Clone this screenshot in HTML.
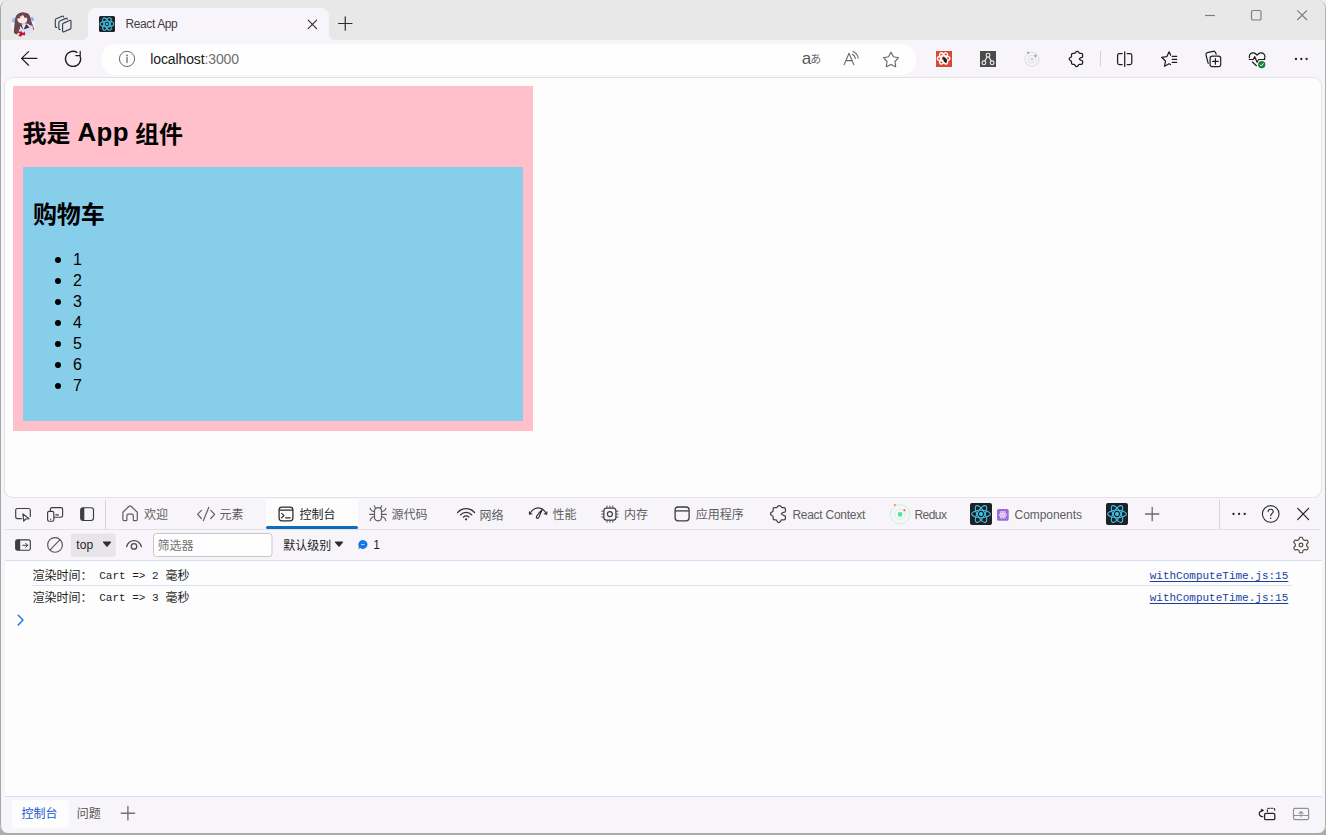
<!DOCTYPE html>
<html><head><meta charset="utf-8"><title>React App</title>
<style>
*{box-sizing:border-box}
html,body{margin:0;padding:0}
body{width:1326px;height:835px;overflow:hidden;position:relative;background:linear-gradient(#efedf3 0,#efedf3 10px,#a9aca9 40px);font-family:"Liberation Sans",sans-serif;color:#1b1b1b}
.abs{position:absolute}
#win{position:absolute;left:0;top:0;width:1326px;height:833px;background:#f7f5f9;border-radius:8px;overflow:hidden}
#win:after{content:"";position:absolute;left:0;top:0;right:0;bottom:0;border-radius:8px;border-left:1px solid #a3aaa3;border-right:1px solid #a9b3a9;pointer-events:none}
#tabstrip{position:absolute;left:0;top:0;width:1326px;height:40px;background:#e8e8e8}
#tab{position:absolute;left:88px;top:8px;width:241px;height:32px;background:#f7f5f9;border-radius:8px 8px 0 0}
#tab:before,#tab:after{content:"";position:absolute;bottom:0;width:5px;height:5px}
#tab:before{left:-5px;background:radial-gradient(circle at 0 0,rgba(0,0,0,0) 4.5px,#f7f5f9 5px)}
#tab:after{right:-5px;background:radial-gradient(circle at 100% 0,rgba(0,0,0,0) 4.5px,#f7f5f9 5px)}
#pill{position:absolute;left:101px;top:44px;width:815px;height:30.5px;border-radius:15.25px;background:#fefefe}
#page{position:absolute;left:5px;top:78px;width:1316px;height:419px;background:#fdfdfd;border-radius:8px;box-shadow:0 0 0 1px #e4e2e6}
#pink{position:absolute;left:13px;top:86px;width:520px;height:344.5px;background:#ffc0cb}
#blue{position:absolute;left:23px;top:167px;width:500px;height:253.7px;background:#87ceeb}
.t{position:absolute;white-space:pre;line-height:1}
svg{display:block}
.ic{position:absolute;overflow:visible}
svg text{font-family:"Liberation Sans","Noto Sans CJK SC",sans-serif;white-space:pre}
</style></head><body>
<div id="win">
<div id="tabstrip"></div>
<div id="tab"></div>
<svg class="ic" style="left:11px;top:11.6px;" width="24" height="25">
<defs><clipPath id="avc"><ellipse cx="12" cy="12.4" rx="12" ry="12.4"/></clipPath><filter id="avb" x="-10%" y="-10%" width="120%" height="120%"><feGaussianBlur stdDeviation="0.45"/></filter></defs>
<g clip-path="url(#avc)"><g filter="url(#avb)">
<rect x="-2" y="-2" width="28" height="30" fill="#f3f0f8"/>
<ellipse cx="2.6" cy="8" rx="2.2" ry="2.6" fill="#8cc4f4"/>
<ellipse cx="21.8" cy="6.6" rx="1.8" ry="2.6" fill="#7db8f2"/>
<path d="M2.6 22 C3.4 16 3.6 9 4.4 5.6 C5.6 1.4 9.5 0.2 12.5 0.3 C16.5 0.4 19 2.4 19.6 6 C20.2 10 22 13.5 23.2 17.5 L19.8 18.5 L17.5 12 L15.5 11.5 L9 13 L8.5 19 L6 22.5 Z" fill="#6d454c"/>
<path d="M6.3 7.5 C6.2 4.6 8.6 3.2 11.2 3.2 C14.2 3.2 16.4 4.8 16.3 7.4 C16.2 9.8 14.2 11.7 11.8 11.6 C8.9 11.5 6.5 10 6.3 7.5Z" fill="#fbe9e6"/>
<path d="M5.6 7.6 C5.8 4 8 2.4 11.3 2.4 L10.4 4.6 L8.8 4.2 L8.2 6.2 L6.6 6.2 Z M11.3 2.4 C14.6 2.4 16.9 4.2 16.8 7.8 L15.4 5.4 L13.6 5.0 L12.8 3.8 Z" fill="#6d454c"/>
<ellipse cx="8.3" cy="5.5" rx="1.0" ry="0.8" fill="#7c3a44"/><ellipse cx="13.9" cy="4.9" rx="1.0" ry="0.8" fill="#7c3a44"/>
<path d="M11.2 11 L12.4 15.6 L14.8 11.6 Z" fill="#f6d8d2"/>
<path d="M12.4 16 L15 11.8 L21.5 14 L22.5 20 L16 24 L10 21 Z" fill="#e4def2"/>
<path d="M8.6 13.4 L12.2 17.4 L10.6 12.6 Z M15.2 12 L12.6 17.6 L18.5 15.5 Z" fill="#34364f"/>
<path d="M7.4 18.6 L10 15.4 L11.8 18 L9.5 20.6 Z" fill="#d9d2ea"/>
<path d="M3 21 C3.4 17 4 14 5 11 L8.6 12.5 L8.8 16.5 L7.2 19.5 L5.4 22 Z" fill="#6d454c"/>
<path d="M6.6 20.2 L10.4 19.2 L12 21 L13.8 19.6 L14.2 23.4 L11.8 23 L9.6 25 L7 23.4 L9 21.8 Z" fill="#b81f30"/>
</g></g></svg>
<svg class="ic" style="left:0px;top:0px;" width="90" height="40">
<g fill="none" stroke="#3a4350" stroke-width="1.15" stroke-linejoin="round" stroke-linecap="round">
<path d="M63.6 23.1 L69.6 20.5 Q71 19.9 71 21.5 V27.7 Q71 28.7 70.1 29.1 L64.1 31.7 Q62.6 32.3 62.6 30.7 V24.6 Q62.6 23.5 63.6 23.1Z"/>
<path d="M67.3 19.1 Q67.2 17.9 65.9 18.4 L59.8 21 Q58.8 21.4 58.8 22.5 V28.4 Q58.8 29.6 60.3 29.5"/>
<path d="M63.6 17 Q63.5 15.8 62.2 16.3 L56.3 18.8 Q55.3 19.2 55.3 20.3 V26.3 Q55.3 27.5 56.8 27.4"/>
</g></svg>
<svg class="ic" style="left:99px;top:16px;" width="16" height="16"><rect width="16" height="16" rx="1.5" fill="#20232a"/><g transform="translate(8.0 8.0)" fill="none" stroke="#3fb9da" stroke-width="1.1"><ellipse rx="6.90" ry="2.70" transform="rotate(0)"/><ellipse rx="6.90" ry="2.70" transform="rotate(60)"/><ellipse rx="6.90" ry="2.70" transform="rotate(120)"/></g><circle cx="8.0" cy="8.0" r="1.30" fill="#3fb9da"/></svg>
<div class="t" style="left:125.40px;top:14.64px;height:18px;line-height:18px;font-size:12px;font-weight:normal;font-family:'Liberation Sans',sans-serif;color:#3f3f3f;letter-spacing:-0.38px;">React App</div>
<svg class="ic" style="left:0px;top:0px;" width="400" height="40">
<g fill="none" stroke="#2b2b2b" stroke-width="1.1" stroke-linecap="round">
<path d="M308.2 20.2 L316.6 28.6 M316.6 20.2 L308.2 28.6"/>
<path d="M338.5 23.5 H352 M345.25 16.8 V30.2" stroke-width="1.2"/>
</g></svg>
<svg class="ic" style="left:1190px;top:0px;" width="136" height="40">
<g fill="none" stroke="#7d7d7d" stroke-width="1.15">
<path d="M15 15.5 H25"/>
<rect x="61.5" y="10.5" width="9.5" height="9.5" rx="1.6"/>
<path d="M107.3 10.3 L117 20 M117 10.3 L107.3 20"/>
</g></svg>
<div id="pill"></div>
<svg class="ic" style="left:0px;top:40px;" width="160" height="38">
<g fill="none" stroke="#1f1f1f" stroke-width="1.25" stroke-linecap="round" stroke-linejoin="round">
<path d="M36.8 18.4 H21.6 M28.6 11.6 L21.6 18.4 L28.6 25.2"/>
<path d="M80.3 16.6 A7.6 7.6 0 1 1 76.9 12.3" stroke-width="1.35"/>
<path d="M80.2 11.4 V15.6 H75.8"/>
</g>
<circle cx="127" cy="18.9" r="7.6" fill="none" stroke="#6b6b6b" stroke-width="1"/>
<circle cx="127" cy="15.4" r="0.9" fill="#6b6b6b"/><path d="M127 17.6 V22.6" stroke="#6b6b6b" stroke-width="1.3" stroke-linecap="round"/>
</svg>
<div class="t" style="left:150.3px;top:49.2px;font-size:14px;height:20px;line-height:20px;letter-spacing:-0.12px;color:#1a1a1a">localhost<span style="color:#6e6e6e">:3000</span></div>
<svg style="position:absolute;left:801px;top:52px;overflow:visible;" width="11" height="13"><text x="0.69" y="11.53" font-size="17" fill="#585858" style="font-family:'Liberation Sans','Noto Sans CJK JP',sans-serif">a</text></svg>
<svg style="position:absolute;left:810px;top:52px;overflow:visible;" width="11" height="13"><text x="0.24" y="10.81" font-size="11" fill="#666" style="font-family:'Liberation Sans','Noto Sans CJK JP',sans-serif">あ</text></svg>
<svg class="ic" style="left:840px;top:44px;" width="24" height="30">
<g fill="none" stroke="#666" stroke-width="1.05" stroke-linecap="round" stroke-linejoin="round">
<path d="M4.1 20.7 L9.0 9.2 L13.9 20.7 M5.9 16.6 H12.1"/>
<path d="M12.4 10.2 Q15.0 11.6 15.4 14.6"/>
<path d="M13.0 7.6 Q17.4 9.4 18.2 14.2"/>
</g></svg>
<svg class="ic" style="left:878px;top:44px;" width="26" height="30"><path d="M13.00 8.20 L15.47 12.80 L20.61 13.73 L16.99 17.50 L17.70 22.67 L13.00 20.40 L8.30 22.67 L9.01 17.50 L5.39 13.73 L10.53 12.80Z" fill="none" stroke="#666" stroke-width="1.1" stroke-linejoin="round"/></svg>
<svg class="ic" style="left:936px;top:51px;" width="16" height="16">
<rect width="16" height="16" fill="#d84a38"/>
<g transform="translate(7.6 7.4)" fill="none" stroke="#fff" stroke-width="1.3">
<ellipse rx="6.3" ry="2.5"/><ellipse rx="6.3" ry="2.5" transform="rotate(60)"/><ellipse rx="6.3" ry="2.5" transform="rotate(120)"/></g>
<ellipse cx="9.3" cy="9.3" rx="1.7" ry="2.1" fill="#1a1a1a" transform="rotate(-25 9.3 9.3)"/><circle cx="7.9" cy="7.3" r="1.0" fill="#1a1a1a"/>
</svg>
<svg class="ic" style="left:980px;top:51px;" width="16" height="16">
<rect width="16" height="16" fill="#4b4b4b"/>
<g fill="none" stroke="#f2f2f2" stroke-width="1.1">
<circle cx="8" cy="4.2" r="1.9"/><circle cx="3.9" cy="11.8" r="1.9"/><circle cx="12.1" cy="11.8" r="1.9"/>
<path d="M7.1 5.9 L4.8 10.1 M8.9 5.9 L11.2 10.1"/></g>
</svg>
<svg class="ic" style="left:1024px;top:51px;" width="16" height="16">
<circle cx="8" cy="8.1" r="7" fill="none" stroke="#dcdcdc" stroke-width="1"/>
<circle cx="8" cy="8.1" r="4" fill="none" stroke="#e2e2e2" stroke-width="1"/>
<circle cx="8" cy="8.1" r="1.7" fill="#d6d6d6"/>
<circle cx="4.2" cy="1.8" r="1.1" fill="#9a9a9a"/><circle cx="11.5" cy="4.9" r="1.1" fill="#8f8f8f"/>
</svg>
<svg class="ic" style="left:1061px;top:45px;" width="30" height="30"><path d="M11.90 8.30 L13.60 8.30 Q14.40 8.30 14.67 7.20 Q16.20 5.40 17.73 7.20 Q18.00 8.30 18.80 8.30 L20.20 8.30 Q21.60 8.30 21.60 9.70 L21.60 11.80 Q21.60 12.50 20.12 12.65 Q16.48 14.00 20.12 15.35 Q21.60 15.50 21.60 16.20 L21.60 18.00 Q21.60 19.40 20.20 19.40 L18.30 19.40 Q17.50 19.40 17.23 20.61 Q15.70 22.59 14.17 20.61 Q13.90 19.40 13.10 19.40 L11.90 19.40 Q10.50 19.40 10.50 18.00 L10.50 16.60 Q10.50 15.80 9.23 15.53 Q7.17 14.00 9.23 12.47 Q10.50 12.20 10.50 11.40 L10.50 9.70 Q10.50 8.30 11.90 8.30Z" fill="none" stroke="#1f1f1f" stroke-width="1.3" stroke-linejoin="round"/></svg>
<div class="abs" style="left:1100px;top:51px;width:1px;height:15px;background:#d2d0d4"></div>
<svg class="ic" style="left:1110px;top:44px;" width="30" height="30">
<g fill="none" stroke="#1f1f1f" stroke-width="1.25" stroke-linecap="round" stroke-linejoin="round">
<path d="M12.2 9.6 H9.4 Q7.6 9.6 7.6 11.4 V18.8 Q7.6 20.6 9.4 20.6 H12.2"/>
<path d="M17.2 9.6 H20.0 Q21.8 9.6 21.8 11.4 V18.8 Q21.8 20.6 20.0 20.6 H17.2"/>
<path d="M14.7 7.8 V22.4"/>
</g></svg>
<svg class="ic" style="left:1155px;top:44px;" width="30" height="30">
<g fill="none" stroke="#1f1f1f" stroke-width="1.25" stroke-linecap="round" stroke-linejoin="round">
<path d="M15.7 11.3 L14.1 7.8 L11.9 12.6 L6.6 13.3 L10.5 17.0 L9.5 22.2 L14.1 19.7 L15.5 20.5"/>
<path d="M17.2 12.3 H21.7 M17.2 15.3 H21.7 M17.2 18.3 H21.7" stroke-width="1.35"/>
</g></svg>
<svg class="ic" style="left:1200px;top:44px;" width="30" height="30">
<g fill="none" stroke="#1f1f1f" stroke-width="1.2" stroke-linecap="round" stroke-linejoin="round">
<rect x="10.1" y="12.1" width="10.6" height="10.6" rx="2.2"/>
<path d="M15.4 14.6 V20.2 M12.6 17.4 H18.2"/>
<path d="M8.2 19.4 L6.0 11.0 Q5.6 9.2 7.4 8.7 L13.0 7.3 Q14.8 6.9 15.5 8.6 L16.2 10.2"/>
</g></svg>
<svg class="ic" style="left:1244px;top:44px;" width="30" height="30">
<g fill="none" stroke="#1f1f1f" stroke-width="1.2" stroke-linecap="round" stroke-linejoin="round">
<path d="M20.3 15.0 Q21.6 12.8 20.5 10.7 Q19.2 8.5 16.6 8.9 Q14.6 9.3 13.1 11.2 Q11.6 9.3 9.7 8.9 Q7.0 8.5 5.7 10.7 Q5.0 12.2 5.5 13.8"/>
<path d="M8.4 18.0 L12.4 21.7"/>
<path d="M5.2 15.5 H9.2 L10.8 12.6 L13.0 18.2 L14.6 15.5 H20.8"/>
</g>
<circle cx="17.7" cy="20.6" r="3.7" fill="#16823a"/>
<path d="M16.0 20.7 L17.3 22.0 L19.5 19.4" fill="none" stroke="#fff" stroke-width="1"/>
</svg>
<svg class="ic" style="left:1290px;top:50px;" width="24" height="18"><circle cx="6" cy="9" r="1.15" fill="#1f1f1f"/><circle cx="11.3" cy="9" r="1.15" fill="#1f1f1f"/><circle cx="16.6" cy="9" r="1.15" fill="#1f1f1f"/></svg>
<div id="page"></div>
<div id="pink"></div>
<div id="blue"></div>
<svg style="position:absolute;left:22px;top:121px;overflow:visible;" width="50" height="26"><text x="0.56" y="21.23" font-size="24" font-weight="bold" fill="#000">我是</text></svg>
<div class="t" style="left:77.60px;top:112.76px;height:39px;line-height:39px;font-size:25.8px;font-weight:bold;font-family:'Liberation Sans',sans-serif;color:#000;letter-spacing:0.4px;">App</div>
<svg style="position:absolute;left:134px;top:121px;overflow:visible;" width="50" height="26"><text x="1.01" y="21.50" font-size="24" font-weight="bold" fill="#000">组件</text></svg>
<svg style="position:absolute;left:32px;top:201px;overflow:visible;" width="74" height="26"><text x="0.88" y="22.22" font-size="24" font-weight="bold" fill="#000">购物车</text></svg>
<div class="t" style="left:73.00px;top:247.75px;height:24px;line-height:24px;font-size:16px;font-weight:normal;font-family:'Liberation Sans',sans-serif;color:#000;letter-spacing:0px;">1</div>
<div class="abs" style="left:54.9px;top:256.6px;width:6.5px;height:6.5px;border-radius:50%;background:#000"></div>
<div class="t" style="left:73.00px;top:268.75px;height:24px;line-height:24px;font-size:16px;font-weight:normal;font-family:'Liberation Sans',sans-serif;color:#000;letter-spacing:0px;">2</div>
<div class="abs" style="left:54.9px;top:277.6px;width:6.5px;height:6.5px;border-radius:50%;background:#000"></div>
<div class="t" style="left:73.00px;top:289.75px;height:24px;line-height:24px;font-size:16px;font-weight:normal;font-family:'Liberation Sans',sans-serif;color:#000;letter-spacing:0px;">3</div>
<div class="abs" style="left:54.9px;top:298.6px;width:6.5px;height:6.5px;border-radius:50%;background:#000"></div>
<div class="t" style="left:73.00px;top:310.75px;height:24px;line-height:24px;font-size:16px;font-weight:normal;font-family:'Liberation Sans',sans-serif;color:#000;letter-spacing:0px;">4</div>
<div class="abs" style="left:54.9px;top:319.6px;width:6.5px;height:6.5px;border-radius:50%;background:#000"></div>
<div class="t" style="left:73.00px;top:331.75px;height:24px;line-height:24px;font-size:16px;font-weight:normal;font-family:'Liberation Sans',sans-serif;color:#000;letter-spacing:0px;">5</div>
<div class="abs" style="left:54.9px;top:340.6px;width:6.5px;height:6.5px;border-radius:50%;background:#000"></div>
<div class="t" style="left:73.00px;top:352.75px;height:24px;line-height:24px;font-size:16px;font-weight:normal;font-family:'Liberation Sans',sans-serif;color:#000;letter-spacing:0px;">6</div>
<div class="abs" style="left:54.9px;top:361.6px;width:6.5px;height:6.5px;border-radius:50%;background:#000"></div>
<div class="t" style="left:73.00px;top:373.75px;height:24px;line-height:24px;font-size:16px;font-weight:normal;font-family:'Liberation Sans',sans-serif;color:#000;letter-spacing:0px;">7</div>
<div class="abs" style="left:54.9px;top:382.6px;width:6.5px;height:6.5px;border-radius:50%;background:#000"></div>
<div class="abs" style="left:1px;top:498px;width:1324px;height:335px;background:#f7f5f9"></div>
<div class="abs" style="left:5px;top:529px;width:1315px;height:1px;background:#e3e1e5"></div>
<div class="abs" style="left:266px;top:499px;width:92px;height:30px;background:#fdfdfd"></div>
<div class="abs" style="left:266px;top:526px;width:92px;height:3px;background:#0f6cbd;border-radius:1.5px"></div>
<div class="abs" style="left:5px;top:561px;width:1317px;height:235px;background:#fdfdfd"></div>
<div class="abs" style="left:5px;top:560px;width:1317px;height:1px;background:#d3e1f6"></div>
<div class="abs" style="left:5px;top:796px;width:1317px;height:1px;background:#d3e1f6"></div>
<div class="abs" style="left:105px;top:500px;width:1px;height:29px;background:#d6d4d8"></div>
<div class="abs" style="left:1219px;top:500px;width:1px;height:29px;background:#d6d4d8"></div>
<svg class="ic" style="left:0px;top:498px;" width="800" height="32">
<g fill="none" stroke="#3d3d3d" stroke-width="1.15" stroke-linecap="round" stroke-linejoin="round">
<!-- inspect -->
<path d="M21.4 20.6 H17.4 Q15.7 20.6 15.7 18.9 V12.2 Q15.7 10.5 17.4 10.5 H28.6 Q30.3 10.5 30.3 12.2 V18.4"/>
<path d="M22.9 15.9 L23.7 23.2 L25.7 21.0 L29.0 20.7 Z"/>
<!-- device -->
<path d="M50.4 13.2 V11.2 Q50.4 9.6 52 9.6 H61 Q62.6 9.6 62.6 11.2 V17.6 Q62.6 19.2 61 19.2 H54.4"/>
<rect x="47.6" y="13.4" width="6.2" height="9.8" rx="1.4"/>
<path d="M55.8 16.9 H58.4"/>
<!-- dock -->
<rect x="80.7" y="9.7" width="12.8" height="12.8" rx="2.4"/>
</g>
<circle cx="50.6" cy="21.2" r="0.65" fill="#3d3d3d"/>
<path d="M84.3 9.7 H83.1 Q80.7 9.7 80.7 12.1 V20.1 Q80.7 22.5 83.1 22.5 H84.3 Z" fill="#3d3d3d"/>
<!-- home -->
<path d="M122.9 14.2 L129.1 8.3 Q130.1 7.4 131.1 8.3 L137.3 14.2 V21.4 Q137.3 22.6 136.1 22.6 H134.2 Q133.3 22.6 133.3 21.7 V17.6 Q133.3 16.1 131.8 16.1 H128.4 Q126.9 16.1 126.9 17.6 V21.7 Q126.9 22.6 126.0 22.6 H124.1 Q122.9 22.6 122.9 21.4 Z" fill="none" stroke="#5e5e5e" stroke-width="1.2" stroke-linejoin="round"/>
<!-- </> -->
<g fill="none" stroke="#5e5e5e" stroke-width="1.2" stroke-linecap="round" stroke-linejoin="round">
<path d="M201.4 12.3 L197.6 16.4 L201.4 20.5 M210.8 12.3 L214.6 16.4 L210.8 20.5 M208.8 9.3 L203.4 22.6"/>
</g>
<!-- console icon -->
<g fill="none" stroke="#2a2a2a" stroke-width="1.25" stroke-linecap="round" stroke-linejoin="round">
<rect x="279.1" y="9.0" width="13.8" height="13.8" rx="2.8"/>
<path d="M279.3 12.1 H292.7" stroke-width="1.1"/>
<path d="M281.7 15.4 L284.0 17.6 L281.7 19.8 M285.6 19.8 H290.2"/>
</g>
<!-- bug -->
<g fill="none" stroke="#5e5e5e" stroke-width="1.15" stroke-linecap="round" stroke-linejoin="round">
<rect x="374.5" y="9.6" width="7.0" height="13.2" rx="3.5"/>
<path d="M375.6 10.2 L374.2 7.8 M380.4 10.2 L381.8 7.8"/>
<path d="M374.5 13.6 Q371.0 13.4 370.0 10.2 M381.5 13.6 Q385.0 13.4 386.0 10.2"/>
<path d="M374.5 16.3 H369.6 M381.5 16.3 H386.4"/>
<path d="M374.5 18.8 Q371.0 19.0 370.2 22.6 M381.5 18.8 Q385.0 19.0 385.8 22.6"/>
</g>
<!-- wifi -->
<g fill="none" stroke="#2f2f2f" stroke-width="1.3" stroke-linecap="round">
<path d="M457.6 14.6 A11 11 0 0 1 474.6 14.6"/>
<path d="M460.5 16.9 A7.4 7.4 0 0 1 471.7 16.9"/>
<path d="M463.3 19.1 A3.9 3.9 0 0 1 468.9 19.1"/>
</g>
<circle cx="466.1" cy="21.3" r="1.15" fill="#2f2f2f"/>
<!-- perf -->
<g fill="none" stroke="#2f2f2f" stroke-width="1.15" stroke-linecap="round" stroke-linejoin="round">
<path d="M529.6 16.0 Q533.0 9.9 538.3 9.9 Q543.4 9.9 546.6 16.0"/>
<path d="M529.4 13.8 L529.6 16.1 L531.9 15.8 M546.9 13.8 L546.6 16.1 L544.3 15.8"/>
<path d="M542.6 11.2 Q540.6 14.6 538.9 19.3 Q538.2 20.8 537.0 20.3 Q535.9 19.7 536.6 18.3 Q539.0 14.4 542.6 11.2 Z"/>
</g>
<!-- memory chip -->
<g fill="none" stroke="#3d3d3d" stroke-width="1.2" stroke-linecap="round" stroke-linejoin="round">
<rect x="603.9" y="10.1" width="12.0" height="12.0" rx="2.6"/>
<circle cx="609.9" cy="16.1" r="2.5"/>
<path d="M607 8.0 V9.6 M609.9 8.0 V9.6 M612.8 8.0 V9.6 M607 22.6 V24.2 M609.9 22.6 V24.2 M612.8 22.6 V24.2 M601.8 13.2 H603.4 M601.8 16.1 H603.4 M601.8 19 H603.4 M616.4 13.2 H618 M616.4 16.1 H618 M616.4 19 H618" stroke-width="0.9"/>
</g>
<!-- application -->
<g fill="none" stroke="#3d3d3d" stroke-width="1.3" stroke-linejoin="round">
<rect x="675.1" y="9.0" width="14.0" height="13.8" rx="3"/>
<path d="M675.3 12.9 H688.9"/>
</g>
</svg>
<svg style="position:absolute;left:143px;top:508px;overflow:visible;" width="27" height="15"><text x="1.10" y="11.40" font-size="12" fill="#5e5e5e">欢迎</text></svg>
<svg style="position:absolute;left:219px;top:508px;overflow:visible;" width="26" height="15"><text x="0.42" y="11.39" font-size="12" fill="#5e5e5e">元素</text></svg>
<svg style="position:absolute;left:390px;top:508px;overflow:visible;" width="38" height="14"><text x="1.44" y="11.26" font-size="12" fill="#5e5e5e">源代码</text></svg>
<svg style="position:absolute;left:479px;top:508px;overflow:visible;" width="26" height="15"><text x="0.54" y="11.54" font-size="12" fill="#5e5e5e">网络</text></svg>
<svg style="position:absolute;left:551px;top:508px;overflow:visible;" width="27" height="15"><text x="1.46" y="11.40" font-size="12" fill="#5e5e5e">性能</text></svg>
<svg style="position:absolute;left:624px;top:508px;overflow:visible;" width="26" height="15"><text x="-0.09" y="11.38" font-size="12" fill="#5e5e5e">内存</text></svg>
<svg style="position:absolute;left:695px;top:508px;overflow:visible;" width="50" height="15"><text x="0.87" y="11.48" font-size="12" fill="#5e5e5e">应用程序</text></svg>
<svg style="position:absolute;left:298px;top:508px;overflow:visible;" width="38" height="15"><text x="1.52" y="11.43" font-size="12" fill="#1c1c1c">控制台</text></svg>
<svg class="ic" style="left:764px;top:500px;" width="30" height="30"><path d="M10.50 7.60 L12.50 7.60 Q13.30 7.60 13.60 6.45 Q15.30 4.56 17.00 6.45 Q17.30 7.60 18.10 7.60 L20.00 7.60 Q21.40 7.60 21.40 9.00 L21.40 11.40 Q21.40 12.10 19.60 12.30 Q15.20 13.80 19.60 15.30 Q21.40 15.50 21.40 16.20 L21.40 18.50 Q21.40 19.90 20.00 19.90 L17.60 19.90 Q16.80 19.90 16.50 21.39 Q14.80 23.82 13.10 21.39 Q12.80 19.90 12.00 19.90 L10.50 19.90 Q9.10 19.90 9.10 18.50 L9.10 16.60 Q9.10 15.80 7.67 15.50 Q5.33 13.80 7.67 12.10 Q9.10 11.80 9.10 11.00 L9.10 9.00 Q9.10 7.60 10.50 7.60Z" fill="none" stroke="#3f3f3f" stroke-width="1.25" stroke-linejoin="round"/></svg>
<div class="t" style="left:792.40px;top:505.84px;height:18px;line-height:18px;font-size:12px;font-weight:normal;font-family:'Liberation Sans',sans-serif;color:#5e5e5e;letter-spacing:-0.26px;">React Context</div>
<svg class="ic" style="left:888px;top:502px;" width="24" height="24">
<circle cx="12.1" cy="12.3" r="9.6" fill="none" stroke="#bdf1d6" stroke-width="0.9"/>
<circle cx="12.1" cy="12.3" r="5.2" fill="none" stroke="#c9f4dd" stroke-width="0.9"/>
<rect x="10" y="10.2" width="4.2" height="4.2" rx="0.8" fill="#4ee29b"/>
<circle cx="6.9" cy="3.1" r="1.0" fill="#f7853a"/><circle cx="16.4" cy="8.2" r="1.0" fill="#f0562e"/>
</svg>
<div class="t" style="left:914.40px;top:505.84px;height:18px;line-height:18px;font-size:12px;font-weight:normal;font-family:'Liberation Sans',sans-serif;color:#5e5e5e;letter-spacing:-0.55px;">Redux</div>
<svg class="ic" style="left:970px;top:503px;" width="22" height="22"><rect width="22" height="22" rx="2" fill="#1d2025"/><g transform="translate(11.0 11.0)" fill="none" stroke="#41c3e8" stroke-width="1.1"><ellipse rx="9.45" ry="3.68" transform="rotate(0)"/><ellipse rx="9.45" ry="3.68" transform="rotate(60)"/><ellipse rx="9.45" ry="3.68" transform="rotate(120)"/></g><circle cx="11.0" cy="11.0" r="2.03" fill="#41c3e8"/></svg>
<svg class="ic" style="left:997.3px;top:509px;" width="11.7" height="11.7"><rect width="11.7" height="11.7" rx="1.6" fill="#9a6bd9"/><g transform="translate(5.85 5.85)" fill="none" stroke="#f1e8fb" stroke-width="0.8"><ellipse rx="3.91" ry="1.52" transform="rotate(0)"/><ellipse rx="3.91" ry="1.52" transform="rotate(60)"/><ellipse rx="3.91" ry="1.52" transform="rotate(120)"/></g><circle cx="5.85" cy="5.85" r="0.84" fill="#f1e8fb"/></svg>
<div class="t" style="left:1014.60px;top:505.84px;height:18px;line-height:18px;font-size:12px;font-weight:normal;font-family:'Liberation Sans',sans-serif;color:#5e5e5e;letter-spacing:-0.08px;">Components</div>
<svg class="ic" style="left:1106px;top:503px;" width="22" height="22"><rect width="22" height="22" rx="2" fill="#1d2025"/><g transform="translate(11.0 11.0)" fill="none" stroke="#41c3e8" stroke-width="1.1"><ellipse rx="9.45" ry="3.68" transform="rotate(0)"/><ellipse rx="9.45" ry="3.68" transform="rotate(60)"/><ellipse rx="9.45" ry="3.68" transform="rotate(120)"/></g><circle cx="11.0" cy="11.0" r="2.03" fill="#41c3e8"/></svg>
<svg class="ic" style="left:1130px;top:498px;" width="196" height="64">
<path d="M15.5 16 H28.9 M22.2 9.3 V22.7" stroke="#6a6a6a" stroke-width="1.3" fill="none" stroke-linecap="round"/>
<circle cx="103.5" cy="15.9" r="1.15" fill="#1f1f1f"/><circle cx="109.1" cy="15.9" r="1.15" fill="#1f1f1f"/><circle cx="114.7" cy="15.9" r="1.15" fill="#1f1f1f"/>
<circle cx="140.7" cy="15.9" r="8.3" fill="none" stroke="#2b2b2b" stroke-width="1.1"/>
<path d="M138.1 13.6 Q138.2 11.2 140.7 11.2 Q143.2 11.2 143.2 13.4 Q143.2 14.8 141.8 15.7 Q140.7 16.4 140.7 17.8" fill="none" stroke="#2b2b2b" stroke-width="1.1" stroke-linecap="round"/>
<circle cx="140.7" cy="20.2" r="0.8" fill="#2b2b2b"/>
<path d="M167.7 10.3 L178.6 21.6 M178.6 10.3 L167.7 21.6" stroke="#222" stroke-width="1.2" fill="none" stroke-linecap="round"/>
</svg>
<svg class="ic" style="left:1290px;top:533px;" width="24" height="24"><path d="M16.70 12.00 L16.69 11.75 L16.68 11.50 L16.65 11.26 L16.77 10.98 L17.14 10.64 L17.52 10.25 L17.88 9.83 L18.18 9.39 L18.21 9.02 L18.07 8.70 L17.92 8.40 L17.75 8.10 L17.58 7.81 L17.39 7.53 L17.19 7.25 L16.85 7.09 L16.32 7.13 L15.77 7.23 L15.25 7.36 L14.77 7.51 L14.47 7.48 L14.27 7.33 L14.06 7.19 L13.85 7.06 L13.63 6.94 L13.41 6.83 L13.18 6.73 L13.00 6.50 L12.89 6.00 L12.75 5.48 L12.56 4.96 L12.33 4.47 L12.02 4.27 L11.68 4.23 L11.34 4.21 L11.00 4.20 L10.66 4.21 L10.32 4.23 L9.98 4.27 L9.67 4.47 L9.44 4.96 L9.25 5.48 L9.11 6.00 L9.00 6.50 L8.82 6.73 L8.59 6.83 L8.37 6.94 L8.15 7.06 L7.94 7.19 L7.73 7.33 L7.53 7.48 L7.23 7.51 L6.75 7.36 L6.23 7.23 L5.68 7.13 L5.15 7.09 L4.81 7.25 L4.61 7.53 L4.42 7.81 L4.25 8.10 L4.08 8.40 L3.93 8.70 L3.79 9.02 L3.82 9.39 L4.12 9.83 L4.48 10.25 L4.86 10.64 L5.23 10.98 L5.35 11.26 L5.32 11.50 L5.31 11.75 L5.30 12.00 L5.31 12.25 L5.32 12.50 L5.35 12.74 L5.23 13.02 L4.86 13.36 L4.48 13.75 L4.12 14.17 L3.82 14.61 L3.79 14.98 L3.93 15.30 L4.08 15.60 L4.25 15.90 L4.42 16.19 L4.61 16.47 L4.81 16.75 L5.15 16.91 L5.68 16.87 L6.23 16.77 L6.75 16.64 L7.23 16.49 L7.53 16.52 L7.73 16.67 L7.94 16.81 L8.15 16.94 L8.37 17.06 L8.59 17.17 L8.82 17.27 L9.00 17.50 L9.11 18.00 L9.25 18.52 L9.44 19.04 L9.67 19.53 L9.98 19.73 L10.32 19.77 L10.66 19.79 L11.00 19.80 L11.34 19.79 L11.68 19.77 L12.02 19.73 L12.33 19.53 L12.56 19.04 L12.75 18.52 L12.89 18.00 L13.00 17.50 L13.18 17.27 L13.41 17.17 L13.63 17.06 L13.85 16.94 L14.06 16.81 L14.27 16.67 L14.47 16.52 L14.77 16.49 L15.25 16.64 L15.77 16.77 L16.32 16.87 L16.85 16.91 L17.19 16.75 L17.39 16.47 L17.58 16.19 L17.75 15.90 L17.92 15.60 L18.07 15.30 L18.21 14.98 L18.18 14.61 L17.88 14.17 L17.52 13.75 L17.14 13.36 L16.77 13.02 L16.65 12.74 L16.68 12.50 L16.69 12.25Z" fill="none" stroke="#4a4a3a" stroke-width="1.15" stroke-linejoin="round"/><circle cx="11" cy="12" r="1.9" fill="none" stroke="#4a4a3a" stroke-width="1.15"/></svg>
<svg class="ic" style="left:0px;top:530px;" width="400" height="30">
<g fill="none" stroke="#3d3d3d" stroke-width="1.15" stroke-linecap="round" stroke-linejoin="round">
<rect x="15.7" y="9.8" width="14.6" height="10.4" rx="1.8"/>
<path d="M22.8 15.3 H27.6 M25.7 13.3 L27.7 15.3 L25.7 17.3" stroke-width="1"/>
</g>
<path d="M20.2 9.8 H17.5 Q15.7 9.8 15.7 11.6 V18.4 Q15.7 20.2 17.5 20.2 H20.2 Z" fill="#3d3d3d"/>
<circle cx="55" cy="14.9" r="7.35" fill="none" stroke="#555" stroke-width="1.15"/>
<path d="M49.9 20.1 L60.1 9.7" stroke="#555" stroke-width="1.15"/>
<rect x="70.8" y="3.4" width="45" height="23.4" rx="2.5" fill="#e7e5e8"/>
<path d="M103.4 11.6 H110.6 Q111.3 11.7 110.9 12.4 L107.6 16.5 Q107 17.1 106.4 16.5 L103.1 12.4 Q102.7 11.7 103.4 11.6Z" fill="#2d2d2d"/>
<g fill="none" stroke="#4a4a4a" stroke-width="1.25" stroke-linecap="round">
<path d="M126.6 16.7 Q128.4 10.6 134 10.6 Q139.6 10.6 141.4 16.7"/>
<circle cx="134" cy="16.4" r="2.75"/>
</g>
<rect x="153.5" y="3.5" width="118.5" height="23" rx="3" fill="#fefefe" stroke="#c9c7cb" stroke-width="1"/>
<path d="M335.4 11.6 H342.6 Q343.3 11.7 342.9 12.4 L339.6 16.5 Q339 17.1 338.4 16.5 L335.1 12.4 Q334.7 11.7 335.4 11.6Z" fill="#2d2d2d"/>
<path d="M358.3 14.4 A4.6 4.4 0 1 1 360.2 18.1 L358.3 18.9 L358.9 16.9 Q358.3 15.8 358.3 14.4Z" fill="#1a73e8"/>
<path d="M361.2 14.6 H364.4" stroke="#cfe2fb" stroke-width="1"/>
</svg>
<div class="t" style="left:76.30px;top:536.34px;height:18px;line-height:18px;font-size:12px;font-weight:normal;font-family:'Liberation Sans',sans-serif;color:#1f1f1f;letter-spacing:0.1px;">top</div>
<svg style="position:absolute;left:157px;top:538px;overflow:visible;" width="39" height="15"><text x="0.46" y="11.94" font-size="12" fill="#757575">筛选器</text></svg>
<svg style="position:absolute;left:282px;top:538px;overflow:visible;" width="50" height="15"><text x="1.20" y="11.89" font-size="12" fill="#1f1f1f">默认级别</text></svg>
<div class="t" style="left:373.30px;top:536.14px;height:18px;line-height:18px;font-size:12px;font-weight:normal;font-family:'Liberation Sans',sans-serif;color:#1f1f1f;letter-spacing:0px;">1</div>
<svg style="position:absolute;left:31px;top:568px;overflow:visible;" width="55" height="15"><text x="1.44" y="11.52" font-size="12" fill="#1f1f1f">渲染时间：</text></svg>
<div class="t" style="left:99.20px;top:568.07px;height:16px;line-height:16px;font-size:11px;font-weight:normal;font-family:'Liberation Mono',monospace;color:#1f1f1f;letter-spacing:0px;">Cart =&gt; 2</div>
<svg style="position:absolute;left:165px;top:568px;overflow:visible;" width="26" height="15"><text x="0.54" y="11.59" font-size="12" fill="#1f1f1f">毫秒</text></svg>
<div class="t" style="left:1149.70px;top:567.97px;height:16px;line-height:16px;font-size:11px;font-weight:normal;font-family:'Liberation Mono',monospace;color:#1b3f9f;letter-spacing:0px;text-decoration:underline;text-underline-offset:1.5px">withComputeTime.js:15</div>
<svg style="position:absolute;left:31px;top:590px;overflow:visible;" width="55" height="15"><text x="1.44" y="11.52" font-size="12" fill="#1f1f1f">渲染时间：</text></svg>
<div class="t" style="left:99.20px;top:590.07px;height:16px;line-height:16px;font-size:11px;font-weight:normal;font-family:'Liberation Mono',monospace;color:#1f1f1f;letter-spacing:0px;">Cart =&gt; 3</div>
<svg style="position:absolute;left:165px;top:590px;overflow:visible;" width="26" height="15"><text x="0.54" y="11.59" font-size="12" fill="#1f1f1f">毫秒</text></svg>
<div class="t" style="left:1149.70px;top:589.97px;height:16px;line-height:16px;font-size:11px;font-weight:normal;font-family:'Liberation Mono',monospace;color:#1b3f9f;letter-spacing:0px;text-decoration:underline;text-underline-offset:1.5px">withComputeTime.js:15</div>
<div class="abs" style="left:32px;top:585px;width:1260px;height:1px;background:#d7e4f7"></div>
<svg class="ic" style="left:14px;top:612px;" width="14" height="16"><path d="M4.2 3.2 L9.0 8.1 L4.2 13.0" fill="none" stroke="#1a73e8" stroke-width="1.4" stroke-linecap="round" stroke-linejoin="round"/></svg>
<div class="abs" style="left:11.5px;top:800px;width:57px;height:28px;background:#fdfdfd;border-radius:3px"></div>
<svg style="position:absolute;left:20px;top:807px;overflow:visible;" width="38" height="15"><text x="1.42" y="11.13" font-size="12" fill="#1757d4">控制台</text></svg>
<svg style="position:absolute;left:76px;top:807px;overflow:visible;" width="26" height="14"><text x="0.78" y="10.92" font-size="12" fill="#555">问题</text></svg>
<svg class="ic" style="left:118px;top:803px;" width="20" height="20"><path d="M3.2 10.2 H16.6 M9.9 3.5 V16.9" stroke="#757575" stroke-width="1.4" fill="none" stroke-linecap="round"/></svg>
<svg class="ic" style="left:1254px;top:803px;" width="60" height="22">
<g fill="none" stroke="#262626" stroke-width="1.3" stroke-linecap="round" stroke-linejoin="round">
<rect x="10.6" y="10.4" width="10.2" height="6.3" rx="1.3"/>
<path d="M13.4 8.6 V6.6 Q13.4 5.3 14.7 5.3 H19.4 Q20.7 5.3 20.7 6.6 V8.6" stroke-dasharray="1.7 1.4" stroke-width="1.1"/>
<path d="M8.7 13.7 Q5.0 13.2 5.3 10.2 Q5.6 8.2 7.6 7.6"/>
</g>
<path d="M7.0 5.4 L10.3 7.2 L7.4 9.3 Z" fill="#262626"/>
<g fill="none" stroke="#8f938f" stroke-width="1.2" stroke-linecap="round" stroke-linejoin="round">
<rect x="39.5" y="5.4" width="15.1" height="11.2" rx="1.6"/>
<path d="M39.5 12.5 H54.6"/>
</g>
<path d="M47.05 9.2 V13.8 M45.1 10.5 L47.05 8.5 L49.0 10.5" fill="none" stroke="#9a9e9a" stroke-width="1.1" stroke-linecap="round" stroke-linejoin="round"/>
</svg>
</div>
</body></html>
